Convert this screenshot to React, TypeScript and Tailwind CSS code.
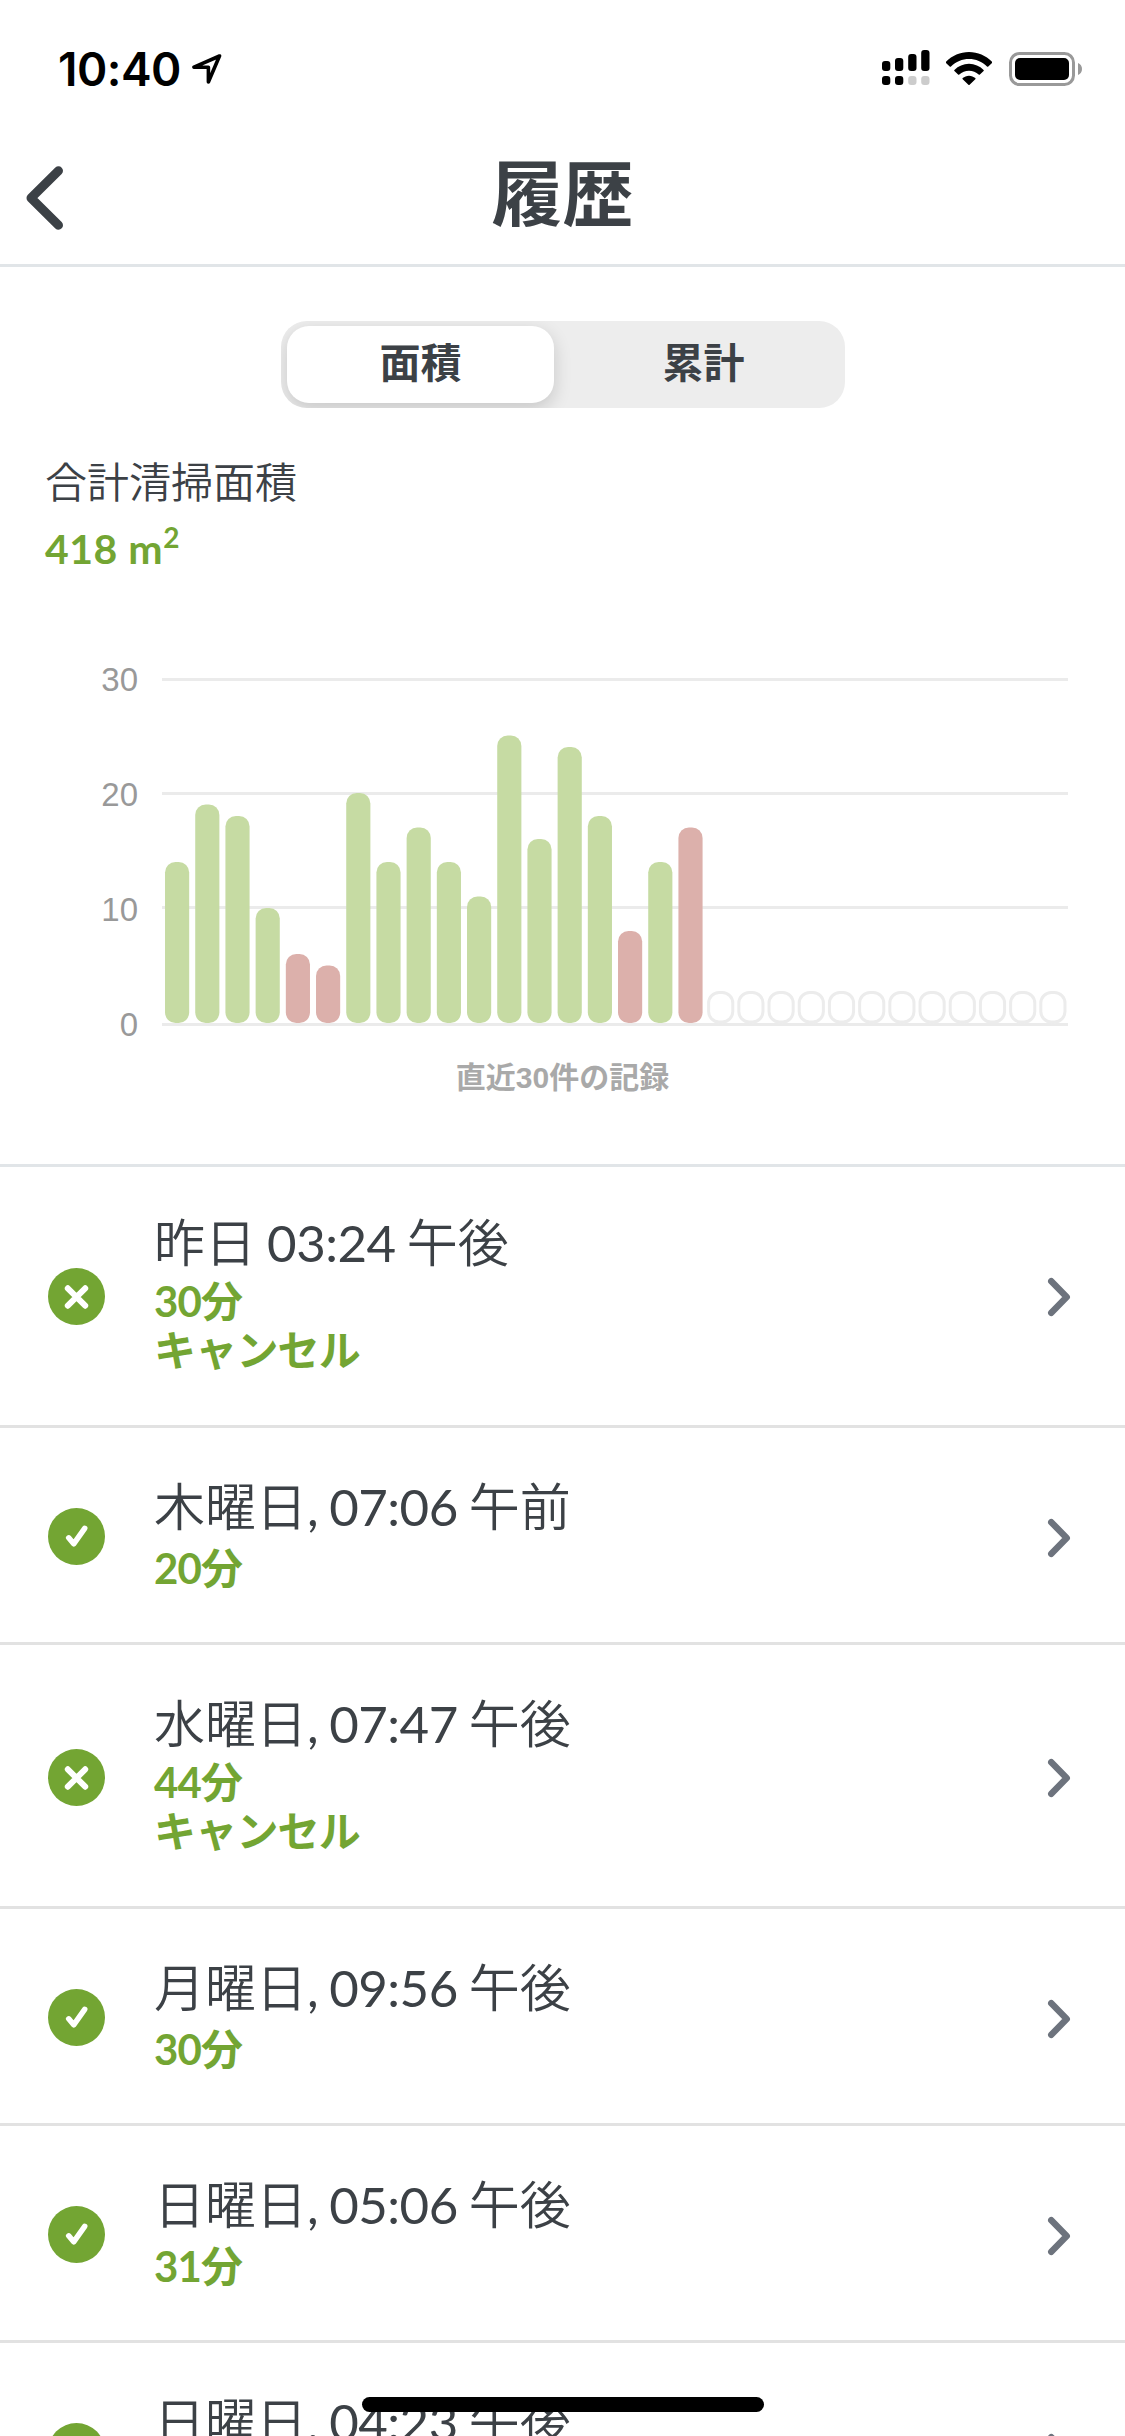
const GREEN = "#73a533";

type Run = {
  title: string;
  duration: string;
  cancelled?: boolean;
};

const runs: Run[] = [
  { title: "昨日 03:24 午後", duration: "30分", cancelled: true },
  { title: "木曜日, 07:06 午前", duration: "20分" },
  { title: "水曜日, 07:47 午後", duration: "44分", cancelled: true },
  { title: "月曜日, 09:56 午後", duration: "30分" },
  { title: "日曜日, 05:06 午後", duration: "31分" },
  { title: "日曜日, 04:23 午後", duration: "30分" },
];

const areas = [14, 19, 18, 10, 6, 5, 20, 14, 17, 14, 11, 25, 16, 24, 18, 8, 14, 17];
const failed = [4, 5, 15, 17];
const SLOTS = 30;

function StatusBar() {
  return (
    <div className="flex h-[138px] shrink-0 items-start justify-between pl-[58px] pr-[42px] pt-[49px]">
      <div className="flex items-start">
        <span className="w-[134px] font-['Inter',sans-serif] text-[46px] font-semibold leading-[40px] tracking-[-0.5px] text-black">10:40</span>
        <svg width="30" height="30" viewBox="0 0 30 30" className="mt-[5px]" fill="none" stroke="#000" strokeWidth="3.6" strokeLinejoin="round">
          <path d="M27.5 2 2 13.2h14.4V28z" />
        </svg>
      </div>
      <div className="flex">
        <svg width="48" height="36" viewBox="0 0 48 36" className="mr-[16px] mt-px">
          <rect x="0" y="11" width="8.3" height="10" rx="3" />
          <rect x="13" y="8" width="8.3" height="13" rx="3" />
          <rect x="26.2" y="4" width="8.3" height="17" rx="3" />
          <rect x="39.2" y="0" width="8.3" height="21" rx="3" />
          <rect x="0" y="26" width="8.3" height="9" rx="3" />
          <rect x="13" y="26" width="8.3" height="9" rx="3" />
          <rect x="26.2" y="26" width="8.3" height="9" rx="3" fill="#ccc" />
          <rect x="39.2" y="26" width="8.3" height="9" rx="3" fill="#ccc" />
        </svg>
        <svg width="46" height="34" viewBox="0 0 46 34" className="mr-[17px] mt-[3px]">
          <path d="M0 9.7C6.2 3.600 14.200 0 23 0s16.800 3.600 23 9.700c.3.400.3.900 0 1.200l-3.700 3.500c-.4.400-.9.400-1.300 0C36.100 9.600 29.800 7 23 7S9.900 9.600 5 14.400c-.4.400-.9.400-1.300 0L0 10.900c-.3-.3-.3-.8 0-1.200z" />
          <path d="M8.400 17.900C12.300 14.100 17.400 11.800 23 11.800s10.700 2.300 14.600 6.100c.4.300.4.900 0 1.200l-3.700 3.500c-.3.300-.8.300-1.200 0-2.600-2.400-6-3.900-9.700-3.900s-7.100 1.500-9.700 3.900c-.4.300-.9.300-1.200 0l-3.700-3.500c-.4-.3-.4-.9 0-1.200z" />
          <path d="M16.700 26.100c1.700-1.500 3.900-2.400 6.300-2.400s4.600.9 6.300 2.400c.4.300.4.800 0 1.200l-5.700 5.500c-.3.300-.8.300-1.200 0l-5.700-5.500c-.4-.4-.4-.9 0-1.200z" />
        </svg>
        <svg width="74" height="34" viewBox="0 0 74 34" className="mt-[3px]">
          <rect x="1.500" y="1.500" width="63" height="31" rx="9" fill="none" stroke="#999" strokeWidth="3" />
          <rect x="6" y="6" width="54" height="22" rx="5" />
          <path d="M69 11c2.500 1 4 3.300 4 6s-1.500 5-4 6z" fill="#999" />
        </svg>
      </div>
    </div>
  );
}

function Header() {
  return (
    <header className="grid h-[129px] shrink-0 grid-cols-[1fr_auto_1fr] items-start border-b-3 border-[#e1e5e8]">
      <svg width="38" height="64" viewBox="0 0 38 64" className="ml-[26px] mt-[28px]" fill="none" stroke="#3c4146" strokeWidth="9" strokeLinecap="round" strokeLinejoin="round">
        <path d="M32.500 4.800 5 32l27.500 27.200" />
      </svg>
      <h1 className="mt-[5px] text-[71px] font-bold leading-[100px]">履歴</h1>
    </header>
  );
}

function Segmented() {
  return (
    <div className="mx-auto flex h-[87px] w-[564px] overflow-hidden rounded-[26px] bg-[#ededed] text-[41px] font-bold">
      <div className="ml-[6px] mt-[5px] flex h-[77px] w-[267px] items-center justify-center rounded-[22px] bg-white pb-[4px] pl-[1px] shadow-[0_6px_18px_rgba(0,0,0,0.16)]">
        面積
      </div>
      <div className="flex flex-1 items-center justify-center pb-[4px] pl-[9px]">累計</div>
    </div>
  );
}

function AreaChart() {
  const slot = 906 / SLOTS;
  return (
    <svg width="1125" height="400" viewBox="0 640 1125 400" className="block">
      {[678, 792, 906, 1023].map((y) => (
        <rect key={y} x="162" y={y} width="906" height="3" fill="#ebebeb" />
      ))}
      {["30", "20", "10", "0"].map((label, i) => (
        <text key={label} x="138" y={691 + i * 115} textAnchor="end" fontSize="33" fill="#999" fontFamily="Liberation Sans, sans-serif">
          {label}
        </text>
      ))}
      {Array.from({ length: SLOTS }, (_, i) => {
        const x = 162 + slot * i + slot * 0.1;
        if (i >= areas.length) {
          return <rect key={i} x={x} y="992.500" width={slot * 0.8} height="29.500" rx="10.500" fill="none" stroke="#ececec" strokeWidth="3" />;
        }
        const h = areas[i] * 11.5;
        return <rect key={i} x={x} y={1023 - h} width={slot * 0.8} height={h} rx="10.500" fill={failed.includes(i) ? "#dcb0ab" : "#c6dba3"} />;
      })}
    </svg>
  );
}

function StatusIcon({ cancelled }: { cancelled?: boolean }) {
  return (
    <svg width="57" height="57" viewBox="0 0 57 57" fill="none" stroke="#fff" strokeLinecap="round" strokeLinejoin="round">
      <circle cx="28.500" cy="28.500" r="28.500" fill={GREEN} stroke="none" />
      {cancelled ? (
        <path d="m19.800 20.300 17.400 17.400M37.200 20.300 19.800 37.700" strokeWidth="6" />
      ) : (
        <path d="m20.700 29.800 5 6L36.700 20.300" strokeWidth="5.500" />
      )}
    </svg>
  );
}

function RunTitle({ text }: { text: string }) {
  // the time reads heavier than the kanji around it
  const [, day, time, period] = text.match(/^([^\s,]+)([,\s\d:]+)(.+)$/) ?? [];
  return (
    <p className="whitespace-nowrap text-[51px] font-[350] leading-[62px]">
      {day}
      <span className="font-normal tracking-[-0.500px] [word-spacing:-1.500px]">{time}</span>
      {period}
    </p>
  );
}

function RunRow({ title, duration, cancelled }: Run) {
  return (
    <li className={`flex shrink-0 border-b-3 border-[#e2e2e2] pl-[48px] pr-[54px] ${cancelled ? "h-[264px]" : "h-[217px]"}`}>
      <div className="flex w-[106px] items-center pt-[3px]">
        <StatusIcon cancelled={cancelled} />
      </div>
      <div className="flex-1 pt-[48px]">
        <RunTitle text={title} />
        <div className={`text-[42px] font-bold tracking-[-0.800px] text-[#73a533] ${cancelled ? "mt-[3px] leading-[49px]" : "mt-[5px] leading-[50px]"}`}>
          <p>{duration}</p>
          {cancelled && <p>キャンセル</p>}
        </div>
      </div>
      <div className="flex items-center pt-[5px]">
        <svg width="24" height="40" viewBox="0 0 24 40" fill="none" stroke="#6d737d" strokeWidth="6.500" strokeLinecap="round" strokeLinejoin="round">
          <path d="m4.300 4.200 15.400 15.800L4.300 35.800" />
        </svg>
      </div>
    </li>
  );
}

export default function App() {
  return (
    <div className="relative flex h-[2436px] w-[1125px] flex-col overflow-hidden bg-white font-['Lato','Noto_Sans_CJK_JP',sans-serif] text-[#3c4146]" lang="ja">
      <StatusBar />
      <Header />
      <section className="h-[900px] shrink-0 border-b-3 border-[#e1e5e8] pt-[54px]">
        <Segmented />
        <div className="pl-[45px] pt-[47px]">
          <p className="text-[42px] font-[350] leading-[54px]">合計清掃面積</p>
          <p className="mt-[10px] h-[60px] text-[41px] font-bold leading-[60px] tracking-[0.500px] text-[#73a533]">
            418 m<span className="relative -top-[16px] text-[28px] leading-none">2</span>
          </p>
        </div>
        <div className="mt-[61px]">
          <AreaChart />
        </div>
        <p className="mt-[16px] text-center font-['Liberation_Sans','Noto_Sans_CJK_JP',sans-serif] text-[30px] font-bold leading-[44px] text-[#a9a9a9]">
          直近30件の記録
        </p>
      </section>
      <ul className="-mt-[3px] flex flex-col">
        {runs.map((run) => (
          <RunRow key={run.title} {...run} />
        ))}
      </ul>
      <div className="absolute bottom-[24px] left-[362px] h-[15px] w-[402px] rounded-full bg-black" />
    </div>
  );
}
